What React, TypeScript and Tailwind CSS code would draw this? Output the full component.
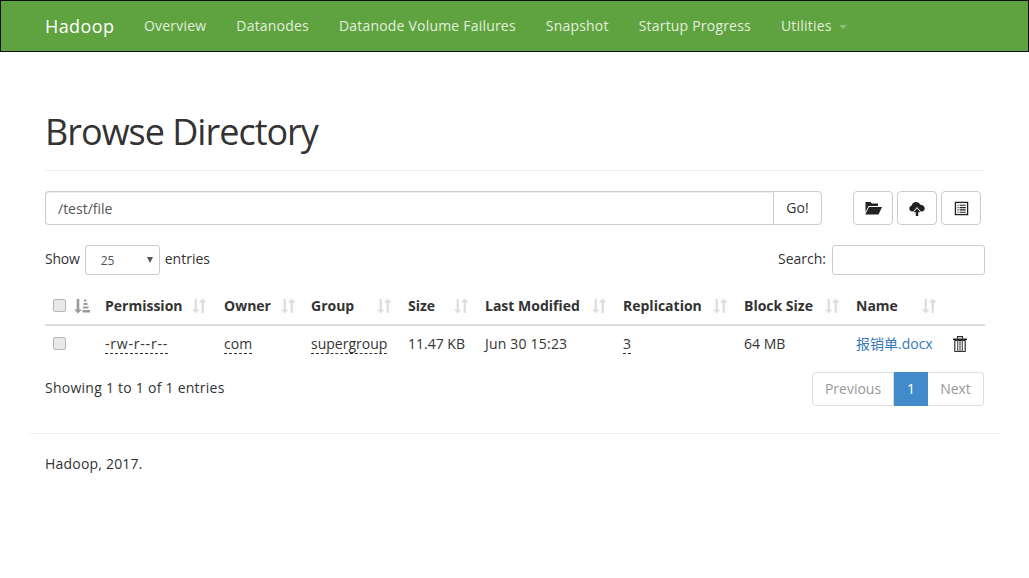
import React from "react";

const navLinks = ["Overview", "Datanodes", "Datanode Volume Failures", "Snapshot", "Startup Progress"];

// column widths come from the text start positions in the table
const columns = [
  { label: "Permission", width: "w-[119px]", pad: "pr-[17px]" },
  { label: "Owner", width: "w-[87px]", pad: "pr-[15px]" },
  { label: "Group", width: "w-[97px]", pad: "pr-[16px]" },
  { label: "Size", width: "w-[77px]", pad: "pr-[16px]" },
  { label: "Last Modified", width: "w-[138px]", pad: "pr-[16px]" },
  { label: "Replication", width: "w-[121px]", pad: "pr-[16px]" },
  { label: "Block Size", width: "w-[112px]", pad: "pr-[16px]" },
  { label: "Name", width: "w-[129px]", pad: "pr-[48px]" },
];

const SortIcon = () => (
  <svg viewBox="0 0 15 16" className="w-[15px] h-[16px] text-[#dedede]" fill="currentColor">
    <path d="M2.600 1h2.300v10.500h2.600L3.700 15.500 0 11.500h2.600z" />
    <path d="M9.600 15h2.300V4.500h2.600L10.700.5 7 4.500h2.600z" />
  </svg>
);

const SortedIcon = () => (
  <svg viewBox="0 0 16 16" className="w-[16px] h-[16px] text-[#9a9a9a]" fill="currentColor">
    <path d="M2.700 1h2.600v10.500h2.500L4 15.500.2 11.500h2.500z" />
    <path d="M10 1.500h2.500V3.500H10zM9.500 5h4v2h-4zM9 8.500h5.500v2H9zM8.500 12H16v2.500H8.500z" />
  </svg>
);

const FolderOpen = () => (
  <svg viewBox="0 0 18 14" className="w-[18px] h-[14px]" fill="#222">
    <path d="M1.500 1h5l1.500 1.500h6v2.500H4.500L1.500 11z" />
    <path d="M5 6h13l-3.500 7.500H1.200z" />
  </svg>
);

const CloudUpload = () => (
  <svg viewBox="0 0 16 16" className="w-[16px] h-[16px]" fill="#222">
    <path d="M3.500 11.500C1.600 11.500.3 10.200.3 8.500c0-1.500 1-2.700 2.400-3C3.100 3.400 4.900 2 7 2c2 0 3.600 1.100 4.300 2.800 2.400-.2 4.400 1.600 4.400 3.800 0 1.600-1.100 2.900-2.700 2.900h-1.300L8 7 4.300 11.500z" />
    <path d="M8 8.200l3.300 4H9.200V16H6.800v-3.800H4.700z" />
  </svg>
);

const ListAlt = () => (
  <svg viewBox="0 0 16 16" className="w-[15px] h-[15px]">
    <rect x="1.500" y="1.500" width="13" height="13" fill="none" stroke="#222" strokeWidth="1.400" />
    <path d="M3.500 4.500h1.500M3.500 7h1.500M3.500 9.500h1.500M3.500 12h1.500" stroke="#555" strokeWidth="1.200" />
    <path d="M6 4.500h6.500M6 7h6.500M6 9.500h6.500M6 12h6.500" stroke="#222" strokeWidth="1.200" />
  </svg>
);

const Trash = () => (
  <svg viewBox="0 0 14 16" className="w-[14px] h-[16px]">
    <path d="M4.500 2.500V.6h5v1.900" fill="none" stroke="#333" strokeWidth="1.100" />
    <path d="M0 2.500h14v1.500H0z" fill="#222" />
    <path d="M1.800 4.500h10.400v11H1.800z" fill="none" stroke="#333" strokeWidth="1.200" />
    <path d="M4.700 5v10M7 5v10M9.300 5v10" stroke="#555" strokeWidth="1.200" />
  </svg>
);

const Abbr = ({ children }: { children: React.ReactNode }) => (
  <span className="border-b border-dashed border-[#333]">{children}</span>
);

const Checkbox = () => (
  <span className="block w-[13px] h-[13px] rounded-[2px] border border-[#b5b5b5] bg-[#e8e8e8]" />
);

export default function App() {
  return (
    <div className="min-h-[578px] bg-white text-[14px] leading-[20px] text-[#333]" style={{ fontFamily: '"Open Sans", "Noto Sans CJK SC", sans-serif' }}>
      <nav className="flex items-center h-[52px] bg-[#5fa341] border border-[#111] pl-[44px]">
        <span className="text-[18px] text-white w-[99px] tracking-[0.4px]">Hadoop</span>
        <div className="flex gap-[30px] text-[#e2efdc] tracking-[0.2px]">
          {navLinks.map((l) => (
            <span key={l}>{l}</span>
          ))}
          <span className="flex items-center">
            Utilities
            <span className="ml-[7px] mt-[2px] border-t-[4px] border-x-[4px] border-x-transparent border-t-[#8fc07a]" />
          </span>
        </div>
      </nav>

      <div className="w-[970px] ml-[30px]">
        <div className="px-[15px]">
          <div className="mt-[40px] border-b border-[#eee] h-[79px]">
            <h1 className="text-[36px] leading-[40px] pt-[20px] tracking-[-1px] text-[#333]">Browse Directory</h1>
          </div>

          <div className="flex mt-[20px] h-[34px]">
            <div className="flex w-[777px]">
              <div className="flex-1 flex items-center pl-[12px] pt-[1px] border border-r-0 border-[#ccc] rounded-l-[4px] text-[#555] shadow-[inset_0_1px_1px_rgba(0,0,0,0.075)]">
                /test/file
              </div>
              <div className="w-[49px] flex items-center justify-center border border-[#ccc] rounded-r-[4px]">Go!</div>
            </div>
            <div className="flex gap-[4px] ml-[31px]">
              <div className="w-[40px] flex items-center justify-center border border-[#ccc] rounded-[4px]">
                <FolderOpen />
              </div>
              <div className="w-[40px] flex items-center justify-center border border-[#ccc] rounded-[4px]">
                <CloudUpload />
              </div>
              <div className="w-[40px] flex items-center justify-center border border-[#ccc] rounded-[4px]">
                <ListAlt />
              </div>
            </div>
          </div>

          <div className="flex items-center justify-between mt-[20px] h-[30px]">
            <div className="flex items-center">
              <span className="pb-[2px] tracking-[-0.2px]">Show</span>
              <div className="flex items-center justify-between w-[75px] h-[30px] ml-[5px] mr-[5px] pl-[15px] pr-[6px] border border-[#ccc] rounded-[3px] text-[12px] text-[#555]">
                <span className="mt-[2px]">25</span>
                <span className="border-t-[6px] border-x-[3.500px] border-x-transparent border-t-[#555]" />
              </div>
              <span className="pb-[2px]">entries</span>
            </div>
            <div className="flex items-center">
              <span className="pb-[2px]">Search:</span>
              <div className="w-[153px] h-[30px] ml-[6px] border border-[#ccc] rounded-[3px]" />
            </div>
          </div>

          <div className="flex items-center mt-[15px] h-[36px] pb-[3px] border-b-2 border-[#ddd] font-bold">
            <div className="flex items-center w-[60px] pl-[8px]">
              <Checkbox />
              <span className="ml-[8px]"><SortedIcon /></span>
            </div>
            {columns.map((c) => (
              <div key={c.label} className={`flex items-center justify-between ${c.width} ${c.pad} shrink-0`}>
                <span>{c.label}</span>
                <SortIcon />
              </div>
            ))}
          </div>

          <div className="flex items-center h-[35px]">
            <div className="w-[60px] pl-[8px]"><Checkbox /></div>
            <div className="w-[119px] shrink-0 tracking-[0.8px]"><Abbr>-rw-r--r--</Abbr></div>
            <div className="w-[87px] shrink-0"><Abbr>com</Abbr></div>
            <div className="w-[97px] shrink-0"><Abbr>supergroup</Abbr></div>
            <div className="w-[77px] shrink-0">11.47 KB</div>
            <div className="w-[138px] shrink-0 tracking-[0.2px]">Jun 30 15:23</div>
            <div className="w-[121px] shrink-0"><Abbr>3</Abbr></div>
            <div className="w-[112px] shrink-0">64 MB</div>
            <div className="w-[97px] shrink-0 text-[#337ab7]">报销单.docx</div>
            <Trash />
          </div>

          <div className="flex items-center justify-between mt-[11px] h-[34px] pr-[1px]">
            <span className="tracking-[0.25px] pb-[2px]">Showing 1 to 1 of 1 entries</span>
            <div className="flex h-[34px]">
              <div className="w-[82px] flex items-center justify-center border border-[#ddd] rounded-l-[4px] text-[#999]">Previous</div>
              <div className="w-[34px] flex items-center justify-center bg-[#428bca] text-white">1</div>
              <div className="w-[56px] flex items-center justify-center border border-l-0 border-[#ddd] rounded-r-[4px] text-[#999]">Next</div>
            </div>
          </div>
        </div>

        <div className="mt-[27px] border-t border-[#eee] pt-[20px] px-[15px] tracking-[0.2px]">Hadoop, 2017.</div>
      </div>
    </div>
  );
}
